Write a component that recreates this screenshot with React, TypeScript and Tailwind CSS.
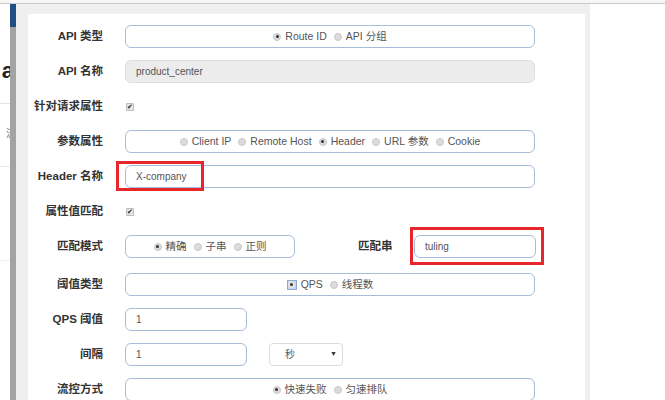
import React from "react";

const font = "font-['Liberation_Sans','Noto_Sans_CJK_SC',sans-serif]";

function Radio({ checked, label, focus }: { checked?: boolean; label: string; focus?: boolean }) {
  return (
    <span className="flex items-center gap-[4px]">
      {focus ? (
        <span className="w-[10px] h-[10px] bg-[#c9d6ec] border border-[#8ea8d4] flex items-center justify-center">
          <span className="w-[7px] h-[7px] rounded-full bg-[#e3e3e3] flex items-center justify-center">
            <span className="w-[3px] h-[3px] rounded-full bg-[#333]" />
          </span>
        </span>
      ) : (
        <span className="w-[8px] h-[8px] rounded-full bg-[#dcdcdc] border border-[#c8c8c8] flex items-center justify-center">
          {checked && <span className="w-[3px] h-[3px] rounded-full bg-[#333]" />}
        </span>
      )}
      <span>{label}</span>
    </span>
  );
}

function RadioBox({ className, children }: { className: string; children: React.ReactNode }) {
  return (
    <div
      className={`h-[23px] rounded-[6px] border border-[#a7bcd8] flex items-center justify-center gap-[7px] text-[10.5px] text-[#555] ${className}`}
    >
      {children}
    </div>
  );
}

function Input({ value, className }: { value: string; className: string }) {
  return (
    <div
      className={`h-[23px] rounded-[6px] border border-[#a7bcd8] flex items-center pl-[10px] text-[10px] text-[#555] ${className}`}
    >
      {value}
    </div>
  );
}

function Check() {
  return (
    <span className="w-[8px] h-[8px] rounded-[1px] bg-[#e6e6e6] border border-[#bdbdbd] flex items-center justify-center text-[7px] leading-none text-[#222]">
      ✔
    </span>
  );
}

function Row({ label, children, className = "" }: { label: string; children: React.ReactNode; className?: string }) {
  return (
    <div className={`h-[35px] flex items-center ${className}`}>
      <div className="w-[75px] text-right text-[11.5px] font-bold text-[#333] whitespace-nowrap">{label}</div>
      <div className="ml-[22px] flex items-center">{children}</div>
    </div>
  );
}

export default function App() {
  return (
    <div className={`w-[665px] h-[400px] overflow-hidden flex flex-col bg-white ${font}`}>
      <div className="h-[4px] bg-[#f6f6f6] border-b border-[#c9c9c9]" />
      <div className="flex flex-1 min-h-0">
        {/* page behind the dialog */}
        <div className="w-[10px] overflow-hidden flex flex-col items-end">
          <div className="h-[56px]" />
          <div className="text-[22px] font-bold leading-none text-[#222] mr-[-4px]">a</div>
          <div className="h-[22px] w-full border-b border-[#e4e4e4]" />
          <div className="mt-[22px] text-[10px] text-[#777] mr-[-6px]">流</div>
          <div className="h-[26px] w-full border-b border-[#e8e8e8]" />
          <div className="h-[94px] w-full border-b border-[#ececec]" />
        </div>
        <div className="w-[6px] bg-[#a3a3a3] flex flex-col">
          <div className="h-[23px] bg-[#1f4f86]" />
        </div>
        {/* dialog */}
        <div className="w-[574px] bg-[#efefef] pl-[12px] pt-[10px] pr-[5px]">
          <div className="bg-white h-full pt-[5px]">
            <Row label="API 类型">
              <RadioBox className="w-[410px]">
                <Radio checked label="Route ID" />
                <Radio label="API 分组" />
              </RadioBox>
            </Row>
            <Row label="API 名称">
              <div className="w-[410px] h-[23px] rounded-[6px] bg-[#ececec] border border-[#dedede] flex items-center pl-[10px] text-[10px] text-[#555]">
                product_center
              </div>
            </Row>
            <Row label="针对请求属性">
              <div className="pl-[1px]">
                <Check />
              </div>
            </Row>
            <Row label="参数属性">
              <RadioBox className="w-[410px]">
                <Radio label="Client IP" />
                <Radio label="Remote Host" />
                <Radio checked label="Header" />
                <Radio label="URL 参数" />
                <Radio label="Cookie" />
              </RadioBox>
            </Row>
            <Row label="Header 名称">
              <div className="relative">
                <Input value="X-company" className="w-[410px]" />
                <div className="absolute left-[-9px] top-[-4px] w-[88px] h-[30px] border-[3px] border-[#e8262c]" />
              </div>
            </Row>
            <Row label="属性值匹配">
              <div className="pl-[1px]">
                <Check />
              </div>
            </Row>
            <Row label="匹配模式">
              <RadioBox className="w-[170px]">
                <Radio checked label="精确" />
                <Radio label="子串" />
                <Radio label="正则" />
              </RadioBox>
              <div className="ml-[63px] w-[35px] text-[11.5px] font-bold text-[#333] whitespace-nowrap">匹配串</div>
              <div className="ml-[21px] relative">
                <Input value="tuling" className="w-[122px]" />
                <div className="absolute left-[-4px] top-[-8px] w-[134px] h-[38px] border-[3px] border-[#e8262c]" />
              </div>
            </Row>
            <Row label="阈值类型" className="mt-[3px]">
              <RadioBox className="w-[410px]">
                <Radio focus checked label="QPS" />
                <Radio label="线程数" />
              </RadioBox>
            </Row>
            <Row label="QPS 阈值">
              <Input value="1" className="w-[122px]" />
            </Row>
            <Row label="间隔">
              <Input value="1" className="w-[122px]" />
              <div className="ml-[22px] w-[74px] h-[23px] rounded-[4px] border border-[#dcdcdc] flex items-center justify-between pl-[15px] pr-[5px] text-[10px] text-[#555]">
                <span>秒</span>
                <span className="text-[7px] text-[#333]">▼</span>
              </div>
            </Row>
            <Row label="流控方式">
              <RadioBox className="w-[410px]">
                <Radio checked label="快速失败" />
                <Radio label="匀速排队" />
              </RadioBox>
            </Row>
          </div>
        </div>
        <div className="flex-1 bg-white" />
      </div>
    </div>
  );
}
